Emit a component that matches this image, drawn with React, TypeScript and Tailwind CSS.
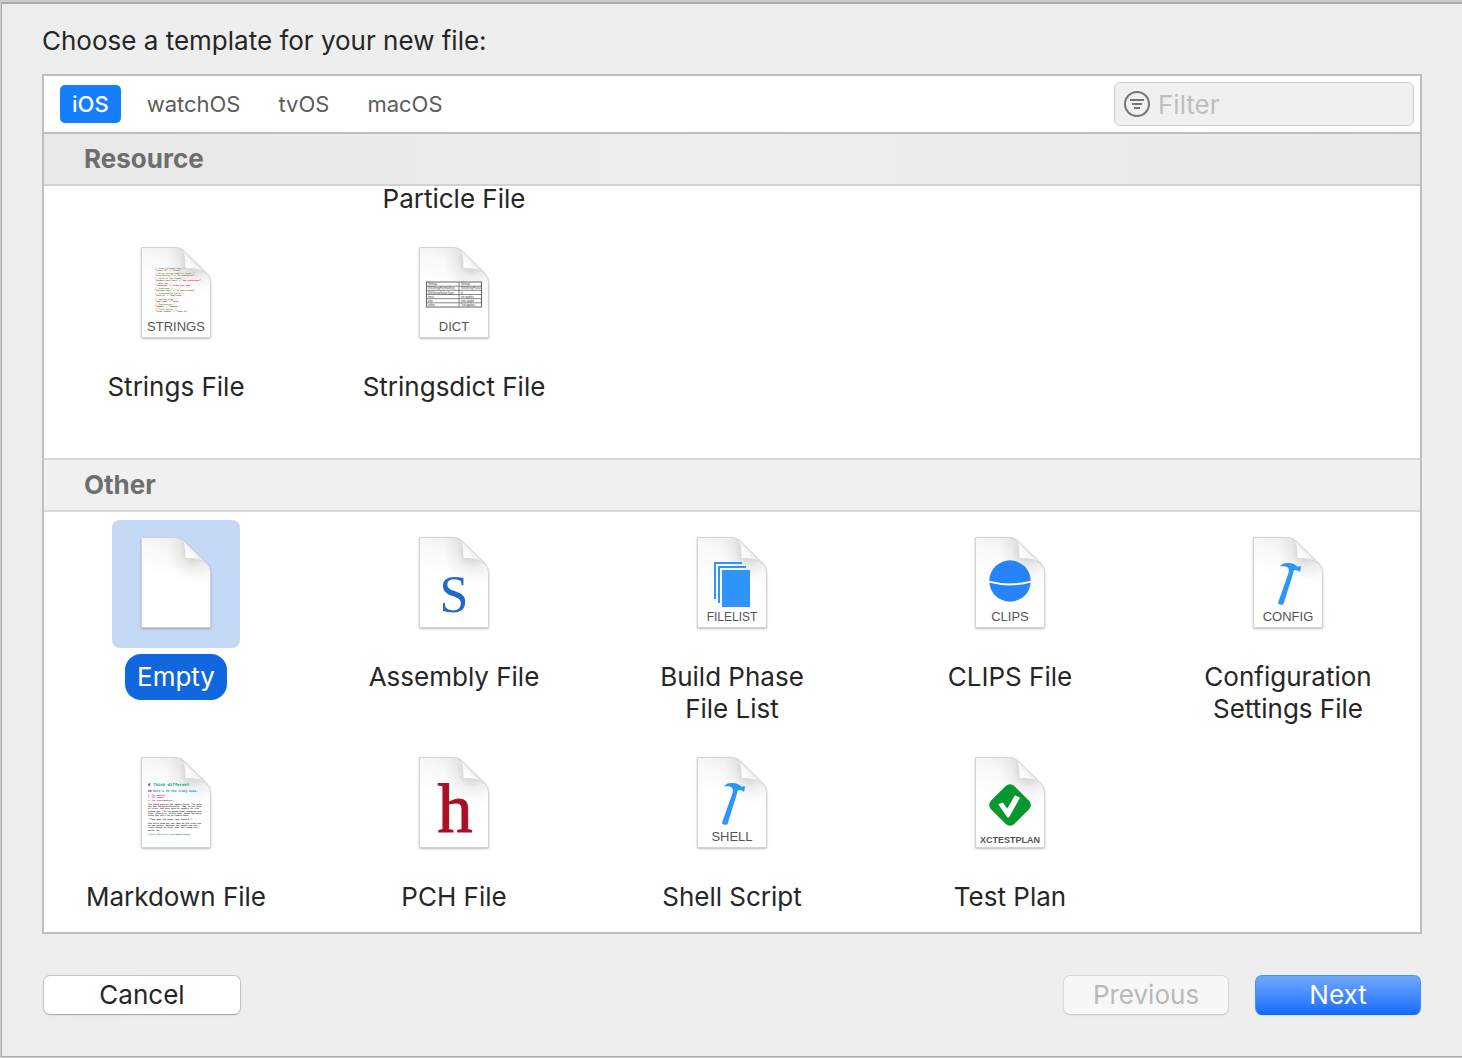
import React, { useState } from "react";

const LABEL_FONT = "'Liberation Sans', Arial, sans-serif";
const SERIF_FONT = "'Liberation Serif', 'Times New Roman', serif";
const MONO_FONT = "'DejaVu Sans Mono', monospace";

const PAGE_OUTLINE =
  "M29.5 17.5H62.5C67.5 17.5 70 19.2 73 22L93 41.5C97 45.5 98.5 48.5 98.5 54V107.5H29.5Z";

function Page({ id, children }: { id: string; children?: React.ReactNode }) {
  return (
    <svg viewBox="0 0 128 128" className="size-32" aria-hidden="true">
      <defs>
        <linearGradient id={`${id}-paper`} gradientUnits="userSpaceOnUse" x1="68" y1="17" x2="56" y2="60">
          <stop offset="0" stopColor="#ececec" />
          <stop offset="0.35" stopColor="#f8f8f8" />
          <stop offset="1" stopColor="#ffffff" />
        </linearGradient>
        <radialGradient id={`${id}-shade`} gradientUnits="userSpaceOnUse" cx="82" cy="32" r="28">
          <stop offset="0.3" stopColor="#000" stopOpacity="0.12" />
          <stop offset="0.55" stopColor="#000" stopOpacity="0.05" />
          <stop offset="1" stopColor="#000" stopOpacity="0" />
        </radialGradient>
        <linearGradient id={`${id}-fold`} gradientUnits="userSpaceOnUse" x1="73" y1="39" x2="83" y2="30">
          <stop offset="0" stopColor="#ffffff" />
          <stop offset="0.6" stopColor="#fafafa" />
          <stop offset="1" stopColor="#e6e6e6" />
        </linearGradient>
        <filter id={`${id}-shadow`} x="-10%" y="-10%" width="120%" height="120%">
          <feDropShadow dx="0" dy="1" stdDeviation="1" floodColor="#000" floodOpacity="0.38" />
        </filter>
      </defs>
      <path d={PAGE_OUTLINE} fill="#fff" filter={`url(#${id}-shadow)`} />
      <path d={PAGE_OUTLINE} fill={`url(#${id}-paper)`} />
      <path d={PAGE_OUTLINE} fill={`url(#${id}-shade)`} stroke="#c4c4c4" strokeWidth="0.7" />
      <path
        d="M67.5 18.5C72 21.5 73.2 27 73 38.5C84 38 91 40 96 45L73 22Z"
        fill={`url(#${id}-fold)`}
        stroke="#d2d2d2"
        strokeWidth="0.7"
      />
      {children}
    </svg>
  );
}

function Caption({ children, size = 13, bold = false }: { children: string; size?: number; bold?: boolean }) {
  return (
    <text
      x="64"
      y={bold ? 103 : 101}
      textAnchor="middle"
      fontFamily={LABEL_FONT}
      fontSize={size}
      fontWeight={bold ? 700 : 400}
      fill="#555"
    >
      {children}
    </text>
  );
}

function Hammer() {
  return (
    <path
      d="M56 46.2C58.3 43.4 61.2 42.9 64.5 42.9C68.6 42.9 71.6 44.2 73.4 46.8C74.4 47 75.2 46.6 75.8 46L77 46.5L76.2 51.4L75 51.6C74.2 50.5 73.4 50.2 72.2 50.2C70.6 49.8 69.8 50.4 69.3 51.6L68.6 55L59.6 83.8C58.9 85.8 53.8 84.8 54.1 82.4L64 54.5C65.6 50.6 65.2 47.6 62 46.6C60 46 57.8 46.3 56 46.2Z"
      fill="#2b96fc"
    />
  );
}

const stringsLines: [number, string, string][] = [
  [39, "g", "/* Insert Element menu */"],
  [41, "r", '"Insert El" = "Insert";'],
  [44, "g", "/* Error string used for types */"],
  [46, "r", '"ErrorString_1" = "An unknown er";'],
  [49, "g", "/* Title of the window */"],
  [51, "r", '"Windows must have" = "one preference";'],
  [54, "g", "/* Menu bar */"],
  [56, "r", '"Yesterday" = "Today you came";'],
  [59, "g", "/* Greetings */"],
  [61, "r", '"Welcome user" = "%@ has arrived";'],
  [64, "g", "/* Confirmation title */"],
  [66, "r", '"Save as" = "Duplicate";'],
  [70, "g", "/* Opening page */"],
  [72, "r", '"Open page" = "Page";'],
  [75, "g", "/* Preferences */"],
  [77, "r", '"Update" = "Updates";'],
  [80, "g", "/* Close button */"],
  [82, "r", '"Close window" = "Close it";'],
];

const dictRows = [
  ["Strings", "Strings"],
  ["NSStringFormatKey", "NSStringPlural"],
  ["NSStringValueType", "d"],
  ["zero", "no apples"],
  ["one", "one apple"],
  ["other", "%d apples"],
];

const markdownLines: [number, number, string, string, number][] = [
  [46, 4, "#0f9a9a", "Think different", 700],
  [52, 3, "#1a7fc4", "Here's to the crazy ones.", 700],
  [56, 2, "#c2185b", "1. The misfits.", 700],
  [58, 2, "#c2185b", "2. The rebels.", 700],
  [61, 2, "#c2185b", "3. The troublemakers.", 700],
  [65, 2, "#333", "The round pegs in the square holes. The ones", 700],
  [67, 2, "#333", "who see things differently. They're not fond", 700],
  [69, 2, "#333", "of rules. And they have no respect for the", 700],
  [72, 2, "#333", "status quo. You can quote them, disagree wit", 700],
  [74, 2, "#333", "them, glorify or vilify them. About the only", 700],
  [76, 2, "#333", "thing you can't do is ignore them.", 700],
  [80, 2, "#3a10b0", "**They push the human race forward.**", 700],
  [84, 2, "#333", "And while some may see them as the crazy one", 700],
  [86, 2, "#333", "we see genius. Because the people who are", 700],
  [88, 2, "#333", "crazy enough to think they can change the", 700],
  [91, 2, "#333", "world, do.", 700],
];

function DocIcon({ kind }: { kind: string }) {
  return (
    <Page id={kind}>
      {kind === "strings" && (
        <>
          {stringsLines.map(([y, c, line]) => (
            <text key={y} x="43" y={y} fontFamily={MONO_FONT} fontSize={2} fontWeight={700} fill={c === "g" ? "#1f9a1f" : "#c42828"}>
              {line}
            </text>
          ))}
          <Caption>STRINGS</Caption>
        </>
      )}
      {kind === "dict" && (
        <>
          <rect x="36.5" y="52" width="55" height="25" fill="#fff" stroke="#666" />
          <path d="M69 52V77M36 56.2H92M36 60.3H92M36 64.5H92M36 68.7H92M36 72.8H92" stroke="#666" strokeWidth="0.8" />
          {dictRows.map(([a, b], i) => (
            <g key={a} fontFamily={LABEL_FONT} fontSize={3} fill="#444">
              <text x="38" y={55.2 + i * 4.17}>{a}</text>
              <text x="71" y={55.2 + i * 4.17}>{b}</text>
            </g>
          ))}
          <Caption>DICT</Caption>
        </>
      )}
      {kind === "assembly" && (
        <text x="64" y="92" textAnchor="middle" fontFamily={SERIF_FONT} fontSize={52} fill="#216bc4">
          S
        </text>
      )}
      {kind === "filelist" && (
        <>
          <path d="M47 79V43H74M51 83V47H78" fill="none" stroke="#2f95fb" strokeWidth="2" />
          <rect x="54" y="50" width="28" height="37" fill="#2f95fb" />
          <Caption size={12}>FILELIST</Caption>
        </>
      )}
      {kind === "clips" && (
        <>
          <circle cx="64" cy="61" r="20.7" fill="#2484f8" />
          <path d="M43 61.6Q64 67.2 85 61.6" fill="none" stroke="#fff" strokeWidth="2" />
          <Caption>CLIPS</Caption>
        </>
      )}
      {kind === "config" && (
        <>
          <Hammer />
          <Caption>CONFIG</Caption>
        </>
      )}
      {kind === "shell" && (
        <>
          <Hammer />
          <Caption>SHELL</Caption>
        </>
      )}
      {kind === "markdown" && (
        <>
          <text x="36" y="46" fontFamily={MONO_FONT} fontSize={4} fontWeight={700} fill="#4a1fc0">#</text>
          <text x="36" y="52" fontFamily={MONO_FONT} fontSize={3} fontWeight={700} fill="#4a1fc0">##</text>
          {markdownLines.map(([y, size, fill, line, weight]) => (
            <text key={y} x={size > 2 ? 41 : 36} y={y} fontFamily={MONO_FONT} fontSize={size} fontWeight={weight} fill={fill}>
              {line}
            </text>
          ))}
          <text x="36" y="95" fontFamily={MONO_FONT} fontSize={2} fontWeight={700} fill="#2fa56b">[Think different]</text>
          <text x="57" y="95" fontFamily={MONO_FONT} fontSize={2} fontWeight={700} fill="#2460c8">(www.apple.com/en)</text>
        </>
      )}
      {kind === "pch" && (
        <text x="65" y="92" textAnchor="middle" fontFamily={SERIF_FONT} fontSize={70} fill="#a90f25" stroke="#a90f25" strokeWidth="1">
          h
        </text>
      )}
      {kind === "testplan" && (
        <>
          <rect x="47.5" y="48.5" width="33" height="33" rx="6" fill="#06982f" transform="rotate(45 64 65)" />
          <path d="M52.3 64.2L56.8 62.6L61.2 68.4L69 55.2L74 57.8L63 77.4H61.4Z" fill="#fff" />
          <Caption size={9} bold>XCTESTPLAN</Caption>
        </>
      )}
    </Page>
  );
}

type Template = { kind: string; lines: string[] };

const resourceTemplates: Template[] = [
  { kind: "strings", lines: ["Strings File"] },
  { kind: "dict", lines: ["Stringsdict File"] },
];

const otherTemplates: Template[] = [
  { kind: "empty", lines: ["Empty"] },
  { kind: "assembly", lines: ["Assembly File"] },
  { kind: "filelist", lines: ["Build Phase", "File List"] },
  { kind: "clips", lines: ["CLIPS File"] },
  { kind: "config", lines: ["Configuration", "Settings File"] },
  { kind: "markdown", lines: ["Markdown File"] },
  { kind: "pch", lines: ["PCH File"] },
  { kind: "shell", lines: ["Shell Script"] },
  { kind: "testplan", lines: ["Test Plan"] },
];

function TemplateGrid({
  items,
  selected,
  onSelect,
}: {
  items: Template[];
  selected: string;
  onSelect: (kind: string) => void;
}) {
  return (
    <div className="grid grid-cols-5 items-start gap-x-3.5 gap-y-2">
      {items.map(({ kind, lines }) => {
        const active = kind === selected;
        return (
          <button
            key={kind}
            type="button"
            aria-pressed={active}
            onClick={() => onSelect(kind)}
            className="flex flex-col items-center gap-1.5"
          >
            <span className={active ? "rounded-lg bg-[#c4d9f6]" : "rounded-lg"}>
              <DocIcon kind={kind} />
            </span>
            <span
              className={
                active
                  ? "rounded-2xl bg-[#1168de] px-3 py-[7px] text-[26px] leading-8 text-white"
                  : "px-3 py-[7px] text-[26px] leading-8"
              }
            >
              {lines.map((line) => (
                <span key={line} className="block">
                  {line}
                </span>
              ))}
            </span>
          </button>
        );
      })}
    </div>
  );
}

const platforms = ["iOS", "watchOS", "tvOS", "macOS"];

export default function App() {
  const [platform, setPlatform] = useState("iOS");
  const [selected, setSelected] = useState("empty");
  const [filter, setFilter] = useState("");

  return (
    <div className="flex min-h-screen flex-col border-t-2 border-b border-l border-[#cdcdcd] bg-[#eeeeee] font-['Inter',sans-serif] text-[#262626]">
      <main className="flex flex-1 flex-col border-t-2 border-b border-l border-[#a9a9a9] bg-linear-to-r from-[#ebedee] via-[#eeeeee] via-10% to-[#eeeeee] px-10 pt-[21px] pb-[41px]">
        <h1 className="text-[26px] leading-8">Choose a template for your new file:</h1>

        <div className="mt-[17px] flex-1 border-2 border-[#bebebe] bg-white">
          <div className="flex items-center justify-between border-b-2 border-[#bebebe] py-1.5 pr-1.5 pl-4">
            <nav className="flex gap-3.5" aria-label="Platform">
              {platforms.map((name) => (
                <button
                  key={name}
                  type="button"
                  aria-pressed={name === platform}
                  onClick={() => setPlatform(name)}
                  className={
                    name === platform
                      ? "h-[38px] rounded-[5px] bg-[#157efb] px-3 text-[22px] font-medium text-white"
                      : "h-[38px] px-3 text-[22px] text-[#5c5c5c]"
                  }
                >
                  {name}
                </button>
              ))}
            </nav>
            <label className="flex h-11 w-[300px] items-center gap-2 rounded-md border border-[#cfcfcf] bg-[#f0f0f0] pl-[9px]">
              <svg viewBox="0 0 26 26" className="size-[26px] shrink-0" fill="none" stroke="#757575" strokeWidth="2" aria-hidden="true">
                <circle cx="13" cy="13" r="12" />
                <path d="M6 9H20M8 13H18M10 17H16" />
              </svg>
              <input
                type="text"
                aria-label="Filter"
                placeholder="Filter"
                value={filter}
                onChange={(e) => setFilter(e.target.value)}
                className="h-8 w-full min-w-0 bg-transparent text-[26px] outline-none placeholder:text-[#bfbfbf]"
              />
            </label>
          </div>

          <section>
            <h2 className="border-b-2 border-[#d2d2d2] bg-linear-to-r from-[#e8e8e8] via-[#ededed] to-[#e9e9e9] pl-10 text-[26px] leading-[50px] font-bold text-[#6e6e6e]">
              Resource
            </h2>
            <div className="pb-12">
              <div className="mb-[18px] grid grid-cols-5 gap-x-3.5">
                <p className="col-start-2 text-center text-[26px] leading-[26px]">Particle File</p>
              </div>
              <TemplateGrid items={resourceTemplates} selected={selected} onSelect={setSelected} />
            </div>
          </section>

          <section>
            <h2 className="border-y-2 border-[#d8d8d8] bg-[#f0f0f0] pl-10 text-[26px] leading-[50px] font-bold text-[#6e6e6e]">
              Other
            </h2>
            <div className="pt-2 pb-3">
              <TemplateGrid items={otherTemplates} selected={selected} onSelect={setSelected} />
            </div>
          </section>
        </div>

        <footer className="mt-[41px] flex items-center gap-[26px] px-px">
          <button
            type="button"
            className="mr-auto h-10 w-[198px] rounded-[7px] border border-[#c4c4c4] border-b-[#adadad] bg-white text-[26px] leading-none shadow-xs"
          >
            Cancel
          </button>
          <button
            type="button"
            disabled
            className="h-10 w-[166px] rounded-[7px] border border-[#d9d9d9] border-b-[#cacaca] bg-[#f7f7f7] text-[26px] leading-none text-[#b9b9b9] shadow-xs"
          >
            Previous
          </button>
          <button
            type="button"
            className="h-10 w-[166px] rounded-[7px] border border-[#4a8ff7] border-b-[#0f66f0] bg-linear-to-b from-[#6fa8fa] to-[#126afd] text-[26px] leading-none text-white shadow-xs"
          >
            Next
          </button>
        </footer>
      </main>
    </div>
  );
}
